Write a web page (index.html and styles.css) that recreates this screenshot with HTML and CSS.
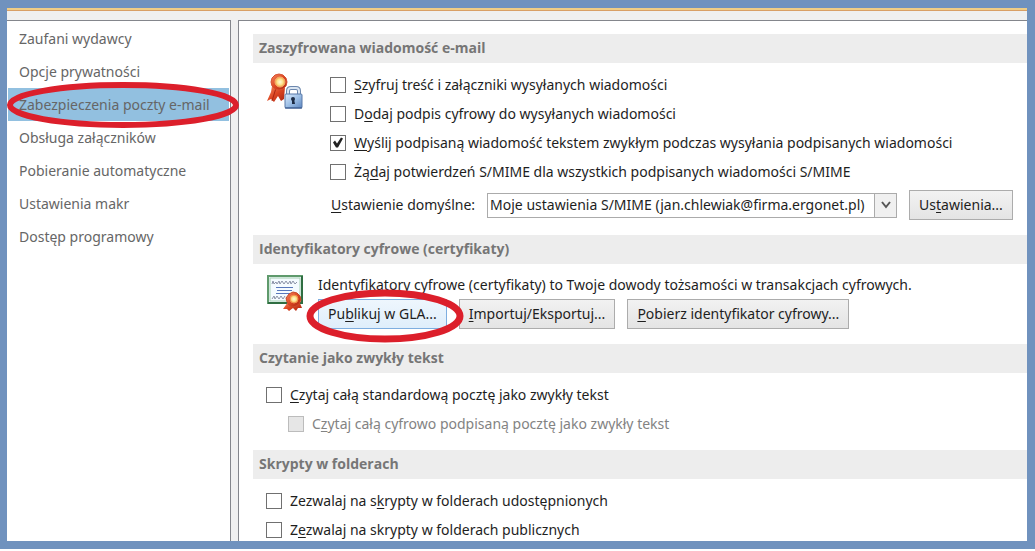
FILE: index.html
```html
<!DOCTYPE html>
<html lang="pl">
<head>
    <meta charset="UTF-8">
    <meta name="viewport" content="width=device-width, initial-scale=1.0">
    <title>Zabezpieczenia poczty e-mail</title>
    <link rel="stylesheet" href="styles.css">
</head>
<body>

    <div class="window">
        <div class="accent"></div>

        <div class="panels">
            <nav class="sidebar">
                <a href="#">Zaufani wydawcy</a>
                <a href="#">Opcje prywatności</a>
                <a href="#" class="active">Zabezpieczenia poczty e-mail
                    <svg class="ring ring-nav" viewBox="0 0 232 46"><ellipse cx="116" cy="23" rx="113" ry="20"/></svg>
                </a>
                <a href="#">Obsługa załączników</a>
                <a href="#">Pobieranie automatyczne</a>
                <a href="#">Ustawienia makr</a>
                <a href="#">Dostęp programowy</a>
            </nav>

            <main class="content">
                <section>
                    <h2>Zaszyfrowana wiadomość e-mail</h2>
                    <div class="with-icon encrypted">
                        <svg class="icon" viewBox="0 0 38 38">
                            <defs>
                                <linearGradient id="red" x1="0" y1="0" x2="1" y2="1">
                                    <stop offset="0" stop-color="#f58a60"/>
                                    <stop offset="0.5" stop-color="#dc4622"/>
                                    <stop offset="1" stop-color="#a82410"/>
                                </linearGradient>
                                <linearGradient id="steel" x1="0" y1="0" x2="1" y2="1">
                                    <stop offset="0" stop-color="#dcebfb"/>
                                    <stop offset="0.5" stop-color="#9dbfe6"/>
                                    <stop offset="1" stop-color="#5c86c0"/>
                                </linearGradient>
                                <radialGradient id="gold">
                                    <stop offset="0" stop-color="#fffbd8"/>
                                    <stop offset="0.6" stop-color="#fde08a"/>
                                    <stop offset="1" stop-color="#f2a03c"/>
                                </radialGradient>
                            </defs>
                            <path d="M6 13 L5 19 L1 28 L5 26 L8 29 L12 23 L15 28 L18 26 L19 14 Z" fill="url(#red)"/>
                            <path d="M10 15 L6 28" stroke="#a82410" fill="none"/>
                            <path d="M13 1 L17 2 L20 5 L21 9 L20 13 L17 16 L13 17 L9 16 L6 13 L5 9 L6 5 L9 2 Z" fill="url(#red)" stroke="#d65030"/>
                            <circle cx="14" cy="9" r="5" fill="url(#gold)" stroke="#f6b070"/>
                            <path d="M22 23 V18 Q22 15 25 15 H30 Q33 15 33 18 V23" fill="none" stroke="#6c87ad" stroke-width="4"/>
                            <path d="M22 23 V18 Q22 15 25 15 H30 Q33 15 33 18 V23" fill="none" stroke="#dbe6f2" stroke-width="2"/>
                            <rect x="19" y="21" width="17" height="14" rx="1" fill="url(#steel)" stroke="#5878a8"/>
                            <path d="M19 35 H36" stroke="#2f4f85"/>
                            <circle cx="27" cy="26" r="2" fill="#1c2b44"/>
                            <path d="M26 26 H28 L29 31 H26 Z" fill="#1c2b44"/>
                        </svg>
                        <div class="fields">
                            <label class="check"><input type="checkbox"><span><u>S</u>zyfruj treść i załączniki wysyłanych wiadomości</span></label>
                            <label class="check"><input type="checkbox"><span>D<u>o</u>daj podpis cyfrowy do wysyłanych wiadomości</span></label>
                            <label class="check"><input type="checkbox" checked><span><u>W</u>yślij podpisaną wiadomość tekstem zwykłym podczas wysyłania podpisanych wiadomości</span></label>
                            <label class="check"><input type="checkbox"><span>Żą<u>d</u>aj potwierdzeń S/MIME dla wszystkich podpisanych wiadomości S/MIME</span></label>
                            <div class="setting">
                                <label for="defaultSetting"><u>U</u>stawienie domyślne:</label>
                                <div class="dropdown">
                                    <select id="defaultSetting">
                                        <option>Moje ustawienia S/MIME (jan.chlewiak@firma.ergonet.pl)</option>
                                    </select>
                                    <span class="arrow"><svg viewBox="0 0 10 8"><path d="M1 1 L5 6 L9 1"/></svg></span>
                                </div>
                                <button type="button">Us<u>t</u>awienia...</button>
                            </div>
                        </div>
                    </div>
                </section>

                <section>
                    <h2>Identyfikatory cyfrowe (certyfikaty)</h2>
                    <div class="with-icon certificates">
                        <svg class="icon" viewBox="0 0 38 38">
                            <rect x="2" y="2" width="34" height="27" fill="#f4fbff" stroke="#5f9a6c" stroke-width="2"/>
                            <path d="M2 29 H36 V2" fill="none" stroke="#2f6e42" stroke-width="2"/>
                            <rect x="4" y="4" width="30" height="23" fill="none" stroke="#a5d0b2"/>
                            <path d="M6 10 L7 7 L8 10 L10 8 L11 10 L13 7 L14 10 L16 7 L18 10 L20 7 L22 10 L24 7 L25 10 L27 7 L29 10 L31 8" fill="none" stroke="#8b93a8"/>
                            <path d="M10 13.5 H27 M11 16.5 H26 M10 19.5 H24" stroke="#5878bc"/>
                            <path d="M6 25 L8 22 L9 25 L11 22 L13 25 L15 22 L17 25 L19 22" fill="none" stroke="#8b93a8"/>
                            <path d="M22 28 L17 35 L21 35 L23 37 L27 34 L30 37 L32 34 L36 34 L33 27 Z" fill="url(#red)"/>
                            <path d="M27 18 L31 19 L34 22 L35 26 L33 30 L30 32 L27 33 L23 31 L21 28 L20 24 L23 20 Z" fill="url(#red)" stroke="#c84a28"/>
                            <circle cx="28" cy="25" r="4" fill="url(#gold)" stroke="#f09050"/>
                        </svg>
                        <div class="fields">
                            <p>Identyfikatory cyfrowe (certyfikaty) to Twoje dowody tożsamości w transakcjach cyfrowych.</p>
                            <div class="buttons">
                                <button type="button" class="focused">Pu<u>b</u>likuj w GLA...
                                    <svg class="ring ring-publish" viewBox="0 0 158 54"><ellipse cx="79" cy="27" rx="75" ry="23"/></svg>
                                </button>
                                <button type="button"><u>I</u>mportuj/Eksportuj...</button>
                                <button type="button"><u>P</u>obierz identyfikator cyfrowy...</button>
                            </div>
                        </div>
                    </div>
                </section>

                <section>
                    <h2>Czytanie jako zwykły tekst</h2>
                    <div class="plain">
                        <label class="check"><input type="checkbox"><span><u>C</u>zytaj całą standardową pocztę jako zwykły tekst</span></label>
                        <label class="check nested"><input type="checkbox" disabled><span>C<u>z</u>ytaj całą cyfrowo podpisaną pocztę jako zwykły tekst</span></label>
                    </div>
                </section>

                <section>
                    <h2>Skrypty w folderach</h2>
                    <div class="plain">
                        <label class="check"><input type="checkbox"><span>Zezwalaj na s<u>k</u>rypty w folderach udostępnionych</span></label>
                        <label class="check"><input type="checkbox"><span>Z<u>e</u>zwalaj na skrypty w folderach publicznych</span></label>
                    </div>
                </section>
            </main>
        </div>
    </div>

</body>
</html>
```
FILE: styles.css
```css
* {
    box-sizing: border-box;
}

body {
    display: flex;
    height: 100vh;
    margin: 0;
    padding-bottom: 2px;
    overflow: hidden;
    background: white;
    color: #1e1e1e;
    font-family: "Segoe UI", "Noto Sans", "Open Sans", sans-serif;
    font-size: 14px;
    line-height: 20px;
}

.window {
    display: flex;
    flex-direction: column;
    flex: 1;
    min-width: 0;
    border: 8px solid #7092be;
    border-left-width: 7px;
    background: #f0f0f0;
}

.accent {
    height: 3px;
    background: #f0cd85;
    border-bottom: 1px solid #d9a066;
}

.panels {
    display: flex;
    flex: 1;
    gap: 7px;
    min-height: 0;
    padding-top: 9px;
}

.sidebar {
    flex: none;
    width: 224px;
    padding: 1px 1px 0;
    background: white;
    border: 1px solid #84868c;
    border-width: 1px 1px 0 0;
}

.sidebar a {
    display: block;
    position: relative;
    padding: 7px 11px 6px;
    color: #666;
    text-decoration: none;
    white-space: nowrap;
}

.sidebar .active {
    background: #92c0e0;
}

.content {
    flex: 1;
    min-width: 0;
    padding: 13px 0 0 14px;
    overflow: hidden;
    background: white;
    border: 1px solid #84868c;
    border-width: 1px 0 0 1px;
}

h2 {
    margin: 0;
    padding: 4px 6px 5px;
    background: #ededed;
    color: #767676;
    font-family: "Segoe UI", "Open Sans", "Noto Sans", sans-serif;
    font-size: 14px;
    line-height: 20px;
}

.with-icon {
    display: flex;
    align-items: flex-start;
}

.icon {
    flex: none;
    width: 38px;
    height: 38px;
    margin-left: 13px;
}

.encrypted {
    gap: 26px;
    padding: 7px 0 15px;
}

.encrypted .icon {
    margin-top: 3px;
}

.certificates {
    gap: 14px;
    padding: 10px 0 15px;
}

.fields {
    flex: 1;
    min-width: 0;
}

.plain {
    padding: 7px 13px 12px;
}

.check {
    display: flex;
    align-items: center;
    gap: 8px;
    height: 29px;
    white-space: nowrap;
}

.check input {
    flex: none;
    appearance: none;
    width: 16px;
    height: 16px;
    margin: 0;
    background: white;
    border: 1px solid #707070;
}

.check input:checked::before {
    content: "";
    display: block;
    width: 14px;
    height: 14px;
    background: #222;
    clip-path: polygon(2px 7px, 4px 5px, 6px 8px, 10px 2px, 12px 3px, 7px 12px, 5px 12px);
}

.check input:disabled {
    background: #e6e6e6;
    border-color: #bcbcbc;
}

.nested {
    margin-left: 22px;
    color: #838383;
}

u {
    text-underline-offset: 2px;
}

.setting {
    display: flex;
    align-items: center;
    gap: 12px;
    margin-top: 4px;
    padding-left: 1px;
    white-space: nowrap;
}

.dropdown {
    position: relative;
    width: 410px;
}

select {
    appearance: none;
    display: block;
    width: 100%;
    height: 25px;
    padding: 0 24px 0 2px;
    background: white;
    border: 1px solid #ababab;
    border-radius: 0;
    color: inherit;
    font: inherit;
}

.arrow {
    display: flex;
    position: absolute;
    top: 0;
    right: 0;
    align-items: center;
    justify-content: center;
    width: 23px;
    height: 25px;
    background: #f0f0f0;
    border: 1px solid #ababab;
    pointer-events: none;
}

.arrow svg {
    width: 10px;
    height: 8px;
}

.arrow path {
    fill: none;
    stroke: #555;
    stroke-width: 2;
}

button {
    position: relative;
    height: 30px;
    padding: 0 9px;
    background: linear-gradient(#f2f2f2, #e4e4e4);
    border: 1px solid #acacac;
    color: inherit;
    font: inherit;
    white-space: nowrap;
}

.focused {
    background: linear-gradient(#eef6fd, #dfeefb);
    border-color: #7eaee0;
}

p {
    margin: 0;
    line-height: 21px;
}

.buttons {
    display: flex;
    gap: 12px;
    margin-top: 4px;
}

/* hand-drawn markers over the highlighted controls */
.ring {
    position: absolute;
    z-index: 1;
    overflow: visible;
    fill: none;
    stroke: #dc1f2b;
    pointer-events: none;
}

.ring-nav {
    top: -6px;
    left: -1px;
    width: 232px;
    height: 46px;
    stroke-width: 6;
}

.ring-publish {
    top: -11px;
    left: -13px;
    width: 158px;
    height: 54px;
    stroke-width: 7;
}
```
